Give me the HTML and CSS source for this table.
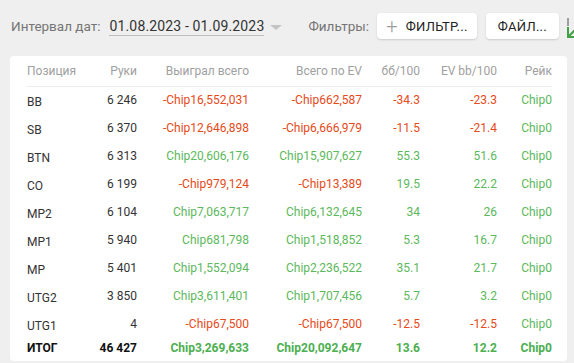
FILE: index.html
```html
<!DOCTYPE html>
<html lang="ru">
<head>
  <meta charset="UTF-8" />
  <title>Статистика по позициям</title>
  <link rel="stylesheet" href="styles.css">
</head>
<body>
  <header class="toolbar">
    <span class="label">Интервал дат:</span>
    <span class="date-range">01.08.2023 - 01.09.2023</span>
    <span class="caret"></span>
    <span class="label filters-label">Фильтры:</span>
    <button class="btn"><span class="plus">+</span>ФИЛЬТР...</button>
    <button class="btn">ФАЙЛ...</button>
    <svg class="chart-icon" width="10" height="22" viewBox="0 0 10 22">
      <rect x="1" y="0" width="2" height="8" fill="#9e9e9e"/>
      <path d="M2 9 V19 H10 M2 19 L9 12" stroke="#43a047" stroke-width="2" fill="none"/>
    </svg>
  </header>

  <section class="card">
    <table class="stats">
      <colgroup>
        <col class="c-pos"><col class="c-hands"><col class="c-won"><col class="c-ev">
        <col class="c-bb"><col class="c-evbb"><col class="c-rake">
      </colgroup>
      <thead>
        <tr>
          <th class="left">Позиция</th>
          <th>Руки</th>
          <th>Выиграл всего</th>
          <th>Всего по EV</th>
          <th>бб/100</th>
          <th>EV bb/100</th>
          <th>Рейк</th>
        </tr>
      </thead>
      <tbody>
        <tr><td class="left">BB</td><td>6 246</td><td class="neg">-Chip16,552,031</td><td class="neg">-Chip662,587</td><td class="neg">-34.3</td><td class="neg">-23.3</td><td class="pos">Chip0</td></tr>
        <tr><td class="left">SB</td><td>6 370</td><td class="neg">-Chip12,646,898</td><td class="neg">-Chip6,666,979</td><td class="neg">-11.5</td><td class="neg">-21.4</td><td class="pos">Chip0</td></tr>
        <tr><td class="left">BTN</td><td>6 313</td><td class="pos">Chip20,606,176</td><td class="pos">Chip15,907,627</td><td class="pos">55.3</td><td class="pos">51.6</td><td class="pos">Chip0</td></tr>
        <tr><td class="left">CO</td><td>6 199</td><td class="neg">-Chip979,124</td><td class="neg">-Chip13,389</td><td class="pos">19.5</td><td class="pos">22.2</td><td class="pos">Chip0</td></tr>
        <tr><td class="left">MP2</td><td>6 104</td><td class="pos">Chip7,063,717</td><td class="pos">Chip6,132,645</td><td class="pos">34</td><td class="pos">26</td><td class="pos">Chip0</td></tr>
        <tr><td class="left">MP1</td><td>5 940</td><td class="pos">Chip681,798</td><td class="pos">Chip1,518,852</td><td class="pos">5.3</td><td class="pos">16.7</td><td class="pos">Chip0</td></tr>
        <tr><td class="left">MP</td><td>5 401</td><td class="pos">Chip1,552,094</td><td class="pos">Chip2,236,522</td><td class="pos">35.1</td><td class="pos">21.7</td><td class="pos">Chip0</td></tr>
        <tr><td class="left">UTG2</td><td>3 850</td><td class="pos">Chip3,611,401</td><td class="pos">Chip1,707,456</td><td class="pos">5.7</td><td class="pos">3.2</td><td class="pos">Chip0</td></tr>
        <tr><td class="left">UTG1</td><td>4</td><td class="neg">-Chip67,500</td><td class="neg">-Chip67,500</td><td class="neg">-12.5</td><td class="neg">-12.5</td><td class="pos">Chip0</td></tr>
      </tbody>
      <tfoot>
        <tr><td class="left">ИТОГ</td><td>46 427</td><td class="pos">Chip3,269,633</td><td class="pos">Chip20,092,647</td><td class="pos">13.6</td><td class="pos">12.2</td><td class="pos">Chip0</td></tr>
      </tfoot>
    </table>
  </section>
</body>
</html>
```

FILE: styles.css
```css
:root {
  --bg-color: #efefef;
  --card-bg: #ffffff;
  --text-color: #333333;
  --muted: #757575;
  --head-color: #a0a0a0;
  --red: #e64a19;
  --green: #5cb85c;
  --line: #ececec;
}

* {
  box-sizing: border-box;
}

body {
  margin: 0;
  background: var(--bg-color);
  color: var(--text-color);
  font-family: Roboto, "Liberation Sans", sans-serif;
  overflow: hidden;
}

.toolbar {
  display: flex;
  align-items: center;
  height: 52px;
  padding: 0 0 0 11px;
  font-size: 14px;
  white-space: nowrap;
}

.label {
  color: var(--muted);
  font-size: 13.5px;
}

.date-range {
  margin-left: 9px;
  color: var(--text-color);
  border-bottom: 1px solid #bdbdbd;
  line-height: 17px;
  padding-top: 2px;
  letter-spacing: 0.15px;
}

.caret {
  width: 0;
  height: 0;
  margin-left: 6px;
  margin-top: 2px;
  border-left: 6px solid transparent;
  border-right: 6px solid transparent;
  border-top: 5px solid #c4c4c4;
}

.filters-label {
  margin-left: 26px;
}

.btn {
  display: flex;
  align-items: center;
  height: 26px;
  margin-left: 8px;
  padding: 0 9px;
  background: var(--card-bg);
  border: none;
  border-radius: 4px;
  box-shadow: 0 1px 2px rgba(0, 0, 0, 0.15);
  font-family: inherit;
  font-size: 13px;
  font-weight: 400;
  color: #222;
  letter-spacing: 0.3px;
}

.btn + .btn {
  margin-left: 9px;
  padding: 0 12px;
}

.plus {
  font-size: 20px;
  font-weight: 300;
  color: #9e9e9e;
  margin-right: 8px;
  line-height: 1;
}

.chart-icon {
  margin-left: 7px;
  margin-top: 6px;
  flex: none;
}

.card {
  margin: 4px 0 0 10px;
  width: 557px;
  background: var(--card-bg);
  border-radius: 4px;
  padding: 0 15px 3px 17px;
}

.stats {
  width: 525px;
  table-layout: fixed;
  border-collapse: collapse;
  font-size: 12px;
}

.c-pos { width: 60px; }
.c-hands { width: 50px; }
.c-won { width: 112px; }
.c-ev { width: 113px; }
.c-bb { width: 58px; }
.c-evbb { width: 77px; }
.c-rake { width: 55px; }

.stats th,
.stats td {
  padding: 0;
  text-align: right;
  white-space: nowrap;
}

.stats .left {
  text-align: left;
}

.stats th {
  height: 30px;
  font-weight: 400;
  color: var(--head-color);
  border-bottom: 1px solid var(--line);
}

.stats tbody td {
  height: 28px;
}

.stats tbody td.left {
  padding-top: 4px;
}

.stats tfoot td {
  height: 20px;
  font-weight: 700;
  color: #111;
}

.stats .neg {
  color: var(--red);
}

.stats .pos {
  color: var(--green);
}

.stats tfoot td.pos {
  color: #4caf50;
}
```
